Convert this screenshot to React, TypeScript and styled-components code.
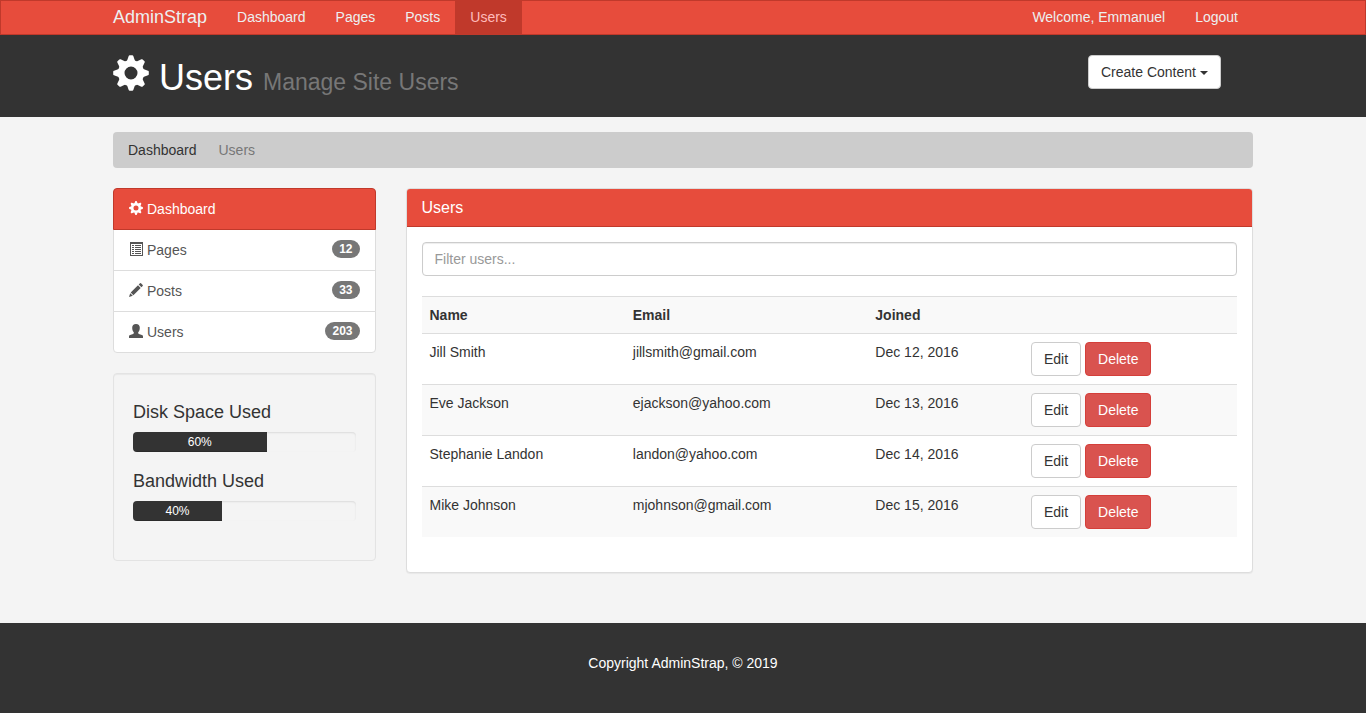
import React from "react";
import styled, { createGlobalStyle, css } from "styled-components";

const GlobalStyle = createGlobalStyle`
  *, *::before, *::after { box-sizing: border-box; }
  body {
    margin: 0;
    background: #f4f4f4;
    color: #333;
    font-family: "Liberation Sans", Arial, Helvetica, sans-serif;
    font-size: 14px;
    line-height: 20px;
  }
  a { text-decoration: none; }
  button, input { font: inherit; }
`;

const Container = styled.div`
  width: 100%;
  max-width: 1170px;
  margin: 0 auto;
  padding: 0 15px;
`;

/* Navigation bar */

const Navbar = styled.nav`
  background: #e74c3c;
  border: 1px solid #c0392b;
`;

const NavInner = styled(Container)`
  display: flex;
  flex-wrap: wrap;
`;

const Brand = styled.a`
  padding-right: 15px;
  font-size: 18px;
  line-height: 33px;
  color: #ecf0f1;
`;

const NavList = styled.ul<{ $end?: boolean }>`
  display: flex;
  margin: 0;
  margin-left: ${(p) => (p.$end ? "auto" : "0")};
  padding: 0;
  list-style: none;
`;

const NavLink = styled.a<{ $active?: boolean }>`
  display: block;
  padding: 0 15px;
  line-height: 33px;
  color: ${(p) => (p.$active ? "#ffbbbc" : "#ecf0f1")};
  background: ${(p) => (p.$active ? "#c0392b" : "transparent")};
`;

/* Page header */

const PageHeader = styled.header`
  background: #333;
  color: #fff;
`;

const HeaderGrid = styled(Container)`
  display: grid;
  grid-template-columns: repeat(12, 1fr);
  column-gap: 30px;
  padding-top: 20px;
  padding-bottom: 16px;
`;

const Title = styled.h1`
  grid-column: span 10;
  display: flex;
  align-items: baseline;
  gap: 10px;
  margin: 0;
  font-size: 36px;
  font-weight: 400;
  line-height: 46px;
`;

const TitleIcon = styled.span`
  align-self: flex-start;
  display: flex;
`;

const Subtitle = styled.small`
  font-size: 23px;
  line-height: 1;
  color: #777;
`;

const HeaderAction = styled.div`
  grid-column: span 2;
`;

const Button = styled.button<{ $danger?: boolean }>`
  padding: 6px 12px;
  border: 1px solid #ccc;
  border-radius: 4px;
  background: #fff;
  color: #333;
  line-height: 20px;
  white-space: nowrap;
  cursor: pointer;
  ${(p) =>
    p.$danger &&
    css`
      background: #d9534f;
      border-color: #d43f3a;
      color: #fff;
    `}
`;

const Caret = styled.span`
  display: inline-block;
  margin-left: 4px;
  vertical-align: middle;
  border-top: 4px solid;
  border-left: 4px solid transparent;
  border-right: 4px solid transparent;
`;

/* Breadcrumb */

const Breadcrumb = styled.ol`
  display: flex;
  gap: 22px;
  margin: 15px 0 20px;
  padding: 8px 15px;
  border-radius: 4px;
  background: #ccc;
  color: #777;
  list-style: none;

  a { color: #333; }
`;

/* Columns */

const Columns = styled.div`
  display: grid;
  grid-template-columns: repeat(12, 1fr);
  column-gap: 30px;
  align-items: start;
`;

const Sidebar = styled.aside`
  grid-column: span 3;
`;

const Main = styled.main`
  grid-column: span 9;
`;

const ListGroup = styled.div`
  margin-bottom: 20px;
`;

const ListItem = styled.a<{ $active?: boolean }>`
  position: relative;
  display: flex;
  align-items: center;
  gap: 4px;
  padding: 10px 15px;
  border: 1px solid #ddd;
  background: #fff;
  color: #555;

  & + & { margin-top: -1px; }
  &:first-child { border-radius: 4px 4px 0 0; }
  &:last-child { border-radius: 0 0 4px 4px; }
  svg { margin-bottom: 2px; }

  ${(p) =>
    p.$active &&
    css`
      z-index: 1;
      background: #e74c3c;
      border-color: #c0392b;
      color: #fff;
    `}
`;

const Badge = styled.span`
  margin: 0 0 2px auto;
  padding: 3px 7px;
  border-radius: 10px;
  background: #777;
  color: #fff;
  font-size: 12px;
  font-weight: 700;
  line-height: 12px;
`;

const Well = styled.section`
  padding: 29px 19px 39px;
  border: 1px solid #e3e3e3;
  border-radius: 4px;
  background: #f4f4f4;
  box-shadow: inset 0 1px 1px rgba(0, 0, 0, 0.05);
`;

const MeterTitle = styled.h4`
  margin: 0 0 10px;
  font-size: 18px;
  font-weight: 400;
  line-height: 19px;
`;

const Meter = styled.div`
  & + & { margin-top: 20px; }
`;

const Track = styled.div`
  overflow: hidden;
  border-radius: 4px;
  background: #f4f4f4;
  box-shadow: inset 0 1px 2px rgba(0, 0, 0, 0.1);
`;

const Bar = styled.div`
  background: #333;
  box-shadow: inset 0 -1px 0 rgba(0, 0, 0, 0.15);
  color: #fff;
  font-size: 12px;
  line-height: 20px;
  text-align: center;
`;

/* Users panel */

const Panel = styled.section`
  border: 1px solid #ddd;
  border-radius: 4px;
  background: #fff;
  box-shadow: 0 1px 1px rgba(0, 0, 0, 0.05);
`;

const PanelTitle = styled.h3`
  margin: 0;
  padding: 10px 15px;
  border-bottom: 1px solid #c0392b;
  border-radius: 3px 3px 0 0;
  background: #e74c3c;
  color: #fff;
  font-size: 16px;
  font-weight: 400;
  line-height: 17px;
`;

const PanelBody = styled.div`
  padding: 15px 15px 35px;
`;

const FilterInput = styled.input`
  display: block;
  width: 100%;
  height: 34px;
  margin-bottom: 20px;
  padding: 6px 12px;
  border: 1px solid #ccc;
  border-radius: 4px;
  background: #fff;
  color: #555;
  box-shadow: inset 0 1px 1px rgba(0, 0, 0, 0.075);

  &::placeholder { color: #999; opacity: 1; }
`;

const Table = styled.table`
  width: 100%;
  border-collapse: collapse;

  th, td {
    padding: 8px;
    border-top: 1px solid #ddd;
    text-align: left;
    vertical-align: top;
  }
  tr:nth-child(odd) { background: #f9f9f9; }
`;

const Footer = styled.footer`
  margin-top: 50px;
  padding: 30px 15px 40px;
  background: #333;
  color: #fff;
  text-align: center;

  p { margin: 0; }
`;

/* Icons */

const Glyph = styled.svg`
  display: block;
  flex: none;
  fill: currentColor;
`;

const TEETH = [0, 45, 90, 135, 180, 225, 270, 315];

const CogIcon = ({ size = 14 }: { size?: number }) => (
  <Glyph width={size} height={size} viewBox="0 0 36 36" aria-hidden="true">
    <circle cx="18" cy="18" r="9.8" fill="none" stroke="currentColor" strokeWidth="6.6" />
    {TEETH.map((a) => (
      <path key={a} d="M13.6 7 15.7 1Q15.9.2 16.7.2H19.3Q20.1.2 20.3 1L22.4 7z" transform={`rotate(${a} 18 18)`} />
    ))}
  </Glyph>
);

const ListAltIcon = () => (
  <Glyph width="14" height="14" viewBox="0 0 14 14" aria-hidden="true">
    <path
      fillRule="evenodd"
      d="M1 0h13v14H1zM2 2v11h11V2zM3 3h2v1H3zM6 3h6v1H6zM3 5h2v1H3zM6 5h6v1H6zM3 7h2v1H3zM6 7h6v1H6zM3 9h2v1H3zM6 9h6v1H6zM3 11h2v1H3zM6 11h6v1H6z"
    />
  </Glyph>
);

const PencilIcon = () => (
  <Glyph width="14" height="14" viewBox="0 0 14 14" aria-hidden="true">
    <path d="M0 14 1.2 10.2 3.8 12.8zM1.7 9.6 9 2.3 11.7 5 4.4 12.3zM9.7 1.6 11 .3Q11.5-.1 12 .3L13.7 2Q14.1 2.5 13.7 3L12.4 4.3z" />
  </Glyph>
);

const UserIcon = () => (
  <Glyph width="14" height="14" viewBox="0 0 14 14" aria-hidden="true">
    <path d="M7 0C9.5 0 10.8 1.4 10.8 3.7 10.8 5.9 10.1 7.3 9.2 8.2V9.1C9.2 9.6 9.4 9.8 9.9 10L12.9 10.9C13.7 11.2 14 11.7 14 12.5V14H0V12.5C0 11.7 .3 11.2 1.1 10.9L4.1 10C4.6 9.8 4.8 9.6 4.8 9.1V8.2C3.9 7.3 3.2 5.9 3.2 3.7 3.2 1.4 4.5 0 7 0z" />
  </Glyph>
);

/* Data */

const navItems = ["Dashboard", "Pages", "Posts", "Users"];

const sections = [
  { label: "Dashboard", icon: <CogIcon /> },
  { label: "Pages", icon: <ListAltIcon />, count: 12 },
  { label: "Posts", icon: <PencilIcon />, count: 33 },
  { label: "Users", icon: <UserIcon />, count: 203 },
];

const meters = [
  { label: "Disk Space Used", value: 60 },
  { label: "Bandwidth Used", value: 40 },
];

const users = [
  { name: "Jill Smith", email: "jillsmith@gmail.com", joined: "Dec 12, 2016" },
  { name: "Eve Jackson", email: "ejackson@yahoo.com", joined: "Dec 13, 2016" },
  { name: "Stephanie Landon", email: "landon@yahoo.com", joined: "Dec 14, 2016" },
  { name: "Mike Johnson", email: "mjohnson@gmail.com", joined: "Dec 15, 2016" },
];

export default function App() {
  return (
    <>
      <GlobalStyle />
      <Navbar>
        <NavInner>
          <Brand href="#">AdminStrap</Brand>
          <NavList>
            {navItems.map((item) => (
              <li key={item}>
                <NavLink href="#" $active={item === "Users"}>{item}</NavLink>
              </li>
            ))}
          </NavList>
          <NavList $end>
            <li><NavLink href="#">Welcome, Emmanuel</NavLink></li>
            <li><NavLink href="#">Logout</NavLink></li>
          </NavList>
        </NavInner>
      </Navbar>

      <PageHeader>
        <HeaderGrid>
          <Title>
            <TitleIcon><CogIcon size={36} /></TitleIcon>
            Users
            <Subtitle>Manage Site Users</Subtitle>
          </Title>
          <HeaderAction>
            <Button type="button" aria-haspopup="menu">
              Create Content<Caret />
            </Button>
          </HeaderAction>
        </HeaderGrid>
      </PageHeader>

      <Container>
        <Breadcrumb>
          <li><a href="#">Dashboard</a></li>
          <li>Users</li>
        </Breadcrumb>

        <Columns>
          <Sidebar>
            <ListGroup>
              {sections.map((s, i) => (
                <ListItem key={s.label} href="#" $active={i === 0}>
                  {s.icon}
                  {s.label}
                  {s.count !== undefined && <Badge>{s.count}</Badge>}
                </ListItem>
              ))}
            </ListGroup>
            <Well>
              {meters.map((m) => (
                <Meter key={m.label}>
                  <MeterTitle>{m.label}</MeterTitle>
                  <Track>
                    <Bar
                      role="progressbar"
                      aria-label={m.label}
                      aria-valuenow={m.value}
                      aria-valuemin={0}
                      aria-valuemax={100}
                      style={{ width: `${m.value}%` }}
                    >
                      {m.value}%
                    </Bar>
                  </Track>
                </Meter>
              ))}
            </Well>
          </Sidebar>

          <Main>
            <Panel>
              <PanelTitle>Users</PanelTitle>
              <PanelBody>
                <FilterInput type="text" placeholder="Filter users..." aria-label="Filter users" />
                <Table>
                  <tbody>
                    <tr>
                      <th scope="col">Name</th>
                      <th scope="col">Email</th>
                      <th scope="col">Joined</th>
                      <th />
                    </tr>
                    {users.map((u) => (
                      <tr key={u.email}>
                        <td>{u.name}</td>
                        <td>{u.email}</td>
                        <td>{u.joined}</td>
                        <td>
                          <Button type="button">Edit</Button>{" "}
                          <Button type="button" $danger>Delete</Button>
                        </td>
                      </tr>
                    ))}
                  </tbody>
                </Table>
              </PanelBody>
            </Panel>
          </Main>
        </Columns>
      </Container>

      <Footer>
        <p>Copyright AdminStrap, © 2019</p>
      </Footer>
    </>
  );
}
